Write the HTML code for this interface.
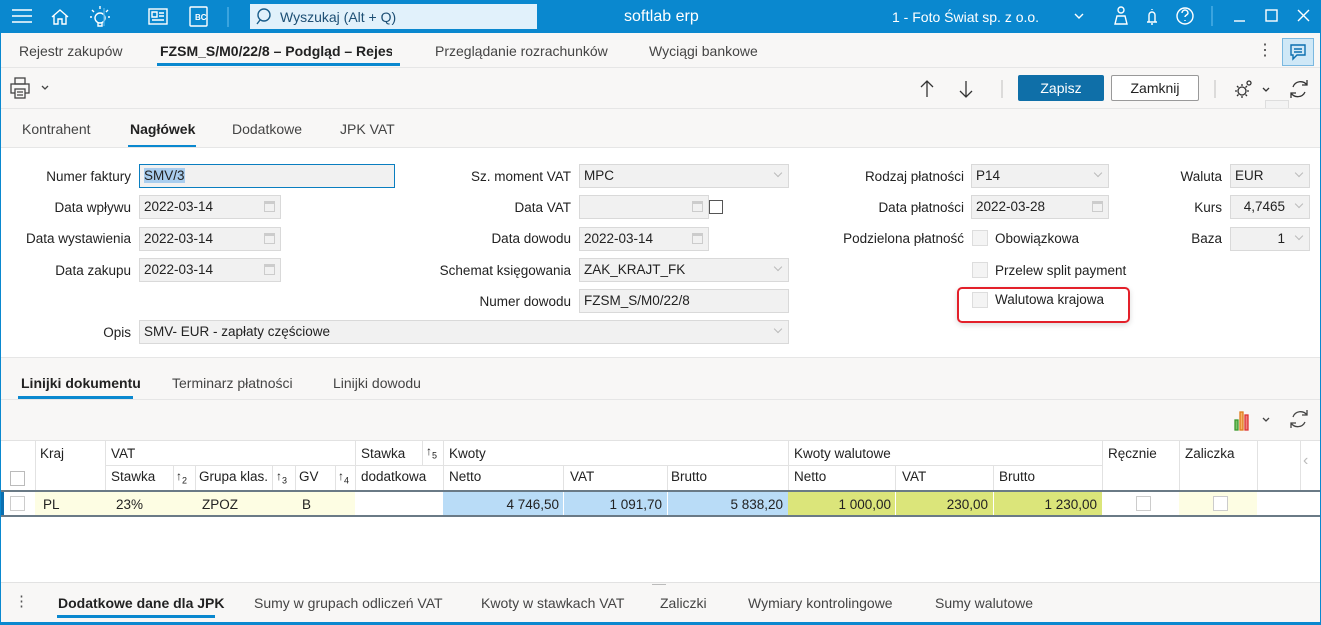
<!DOCTYPE html><html><head><meta charset="utf-8"><style>
*{box-sizing:border-box;margin:0;padding:0}
body{width:1321px;height:625px;overflow:hidden;position:relative;font-family:"Liberation Sans",sans-serif;font-size:13.5px;color:#222;background:#fff}
.a{position:absolute}
.t{position:absolute;white-space:nowrap}
.lbl{position:absolute;text-align:right;white-space:nowrap;font-size:13.5px;color:#222}
.in{position:absolute;height:24px;background:#f1f1f1;border:1px solid #d9d9d9;padding:3px 4px;font-size:13.5px;white-space:nowrap;color:#222}
.cal{position:absolute;right:5px;top:5px;width:11px;height:11px;border:1px solid #ccc;border-top-width:3px}
.dd{position:absolute;right:7px;top:5px;width:6px;height:6px;border-right:1px solid #bbb;border-bottom:1px solid #bbb;transform:rotate(45deg)}
.cb{position:absolute;width:16px;height:16px;border:1px solid #ddd;background:#f4f4f4}
.tab{position:absolute;font-size:14px;color:#444;white-space:nowrap}
.gh{position:absolute;font-size:13.5px;color:#222;white-space:nowrap}
.vl{position:absolute;width:1px;background:#e2e2e2}
.num{position:absolute;text-align:right;font-size:13.5px;top:497px}
</style></head><body>
<!-- title bar -->
<div class="a" style="left:0;top:0;width:1321px;height:33px;background:#0a88cf"></div>
<svg class="a" style="left:0;top:0" width="1321" height="33" fill="none" stroke="#fff" stroke-width="1.4">
<path d="M12 10h20M12 16h20M12 22h20"/>
<path d="M52 17l8-7 8 7M54 15v9h4v-5h4v5h4v-9"/>
<circle cx="100" cy="18" r="5"/><path d="M98 23v3h4v-3M100 6v3M92 10l2 2M108 10l-2 2M90 17h2M108 17h2"/>
<path d="M104 6v21" stroke="none"/><path d="M104 8v18" stroke="#4fb0e6" transform="translate(0,0)" />
<rect x="149" y="9" width="18" height="15"/><path d="M152 12h5v5h-5zM159 13h5M159 16h5M152 20h12"/>
<rect x="190" y="7" width="17" height="19" rx="1"/>
<path d="M228 7v20" stroke="#4fb0e6"/>
<path d="M1075 14l4 4 4-4"/>
<circle cx="1121" cy="10" r="3"/><path d="M1115 24h12l-2-8h-8z"/>
<path d="M1147 22h10M1149 22v-7a3 3 0 016 0v7M1152 9v1M1151 24h2"/>
<circle cx="1185" cy="16" r="8"/><path d="M1182 13a3 3 0 116 0c0 2-3 2-3 4M1185 20v1"/>
<path d="M1212 6v20" stroke="#4fb0e6"/>
<path d="M1234 21h11"/><rect x="1266" y="10" width="11" height="11"/><path d="M1298 10l11 11M1309 10l-11 11"/>
</svg>
<div class="t" style="left:195px;top:13px;color:#fff;font-size:8px;font-weight:bold">BC</div>
<div class="a" style="left:250px;top:4px;width:287px;height:25px;background:#e1f1fb"></div>
<svg class="a" style="left:255px;top:7px" width="20" height="20" fill="none" stroke="#1a5d8a" stroke-width="1.4"><circle cx="9" cy="8" r="6"/><path d="M5 13l-3 4"/></svg>
<div class="t" style="left:280px;top:9px;font-size:14px;color:#1d4f74">Wyszukaj (Alt + Q)</div>
<div class="t" style="left:624px;top:8px;font-size:16px;color:#fff">softlab erp</div>
<div class="t" style="left:892px;top:9px;font-size:14px;color:#fff">1 - Foto Świat sp. z o.o.</div>
<!-- window frame -->
<div class="a" style="left:0;top:33px;width:1px;height:592px;background:#0a88cf"></div>
<div class="a" style="left:1320px;top:33px;width:1px;height:592px;background:#0a88cf"></div>
<div class="a" style="left:0;top:622px;width:1321px;height:3px;background:#0a88cf"></div>
<!-- tab row -->
<div class="a" style="left:1px;top:33px;width:1319px;height:115px;background:#f8f7f6"></div>
<div class="tab" style="left:19px;top:43px">Rejestr zakupów</div>
<div class="tab" style="left:160px;top:43px;font-weight:bold;color:#222;width:232px;overflow:hidden">FZSM_S/M0/22/8 – Podgląd – Rejestr</div>
<div class="a" style="left:157px;top:63px;width:243px;height:3px;background:#0a88cf"></div>
<div class="tab" style="left:435px;top:43px">Przeglądanie rozrachunków</div>
<div class="tab" style="left:649px;top:43px">Wyciągi bankowe</div>
<div class="t" style="left:1257px;top:40px;font-size:16px;color:#444">⋮</div>
<div class="a" style="left:1282px;top:38px;width:32px;height:28px;background:#cfe8f7;border:1px solid #7ab8e0"></div>
<svg class="a" style="left:1288px;top:42px" width="20" height="20" fill="none" stroke="#0a6fb0" stroke-width="1.4"><path d="M3 3h14v10H9l-4 4v-4H3z M6 7h8M6 10h8"/></svg>
<div class="a" style="left:1px;top:67px;width:1319px;height:1px;background:#e6e6e6"></div>
<!-- toolbar -->
<svg class="a" style="left:8px;top:76px" width="46" height="24" fill="none" stroke="#444" stroke-width="1.3"><rect x="7" y="2" width="10" height="6"/><rect x="3" y="8" width="18" height="9"/><rect x="7" y="13" width="10" height="9" fill="#f8f7f6"/><path d="M9 16h6M9 19h6M34 10l3 3 3-3"/></svg>
<svg class="a" style="left:910px;top:76px" width="400" height="26" fill="none" stroke="#333" stroke-width="1.3"><path d="M17 5v16M11 11l6-6 6 6M56 5v16M50 15l6 6 6-6"/><path d="M92 4v18" stroke="#ccc"/><path d="M305 4v18" stroke="#ccc"/>
<circle cx="332" cy="15" r="4"/><path d="M332 8v2M332 20v2M325 15h2M337 15h2M327 10l1.5 1.5M337 20l-1.5-1.5M327 20l1.5-1.5M337 10l-1.5 1.5"/><circle cx="339" cy="7" r="2"/>
<path d="M353 12l3 3 3-3"/>
<path d="M397 9a8 8 0 00-14 2M381 17a8 8 0 0014-1M397 4v5h-5M381 22v-5h5"/></svg>
<div class="a" style="left:1018px;top:75px;width:86px;height:26px;background:#0f6fa8;border-radius:2px;color:#fff;text-align:center;line-height:26px;font-size:14px">Zapisz</div>
<div class="a" style="left:1111px;top:75px;width:88px;height:26px;background:#fff;border:1px solid #999;border-radius:2px;text-align:center;line-height:24px;font-size:14px">Zamknij</div>
<div class="a" style="left:1265px;top:100px;width:24px;height:9px;border:1px solid #ddd;border-bottom:none;background:#f3f3f3"></div>
<div class="a" style="left:1px;top:108px;width:1319px;height:1px;background:#e6e6e6"></div>
<!-- subtabs -->
<div class="tab" style="left:22px;top:121px">Kontrahent</div>
<div class="tab" style="left:130px;top:121px;font-weight:bold;color:#222">Nagłówek</div>
<div class="a" style="left:128px;top:145px;width:68px;height:3px;background:#0a88cf"></div>
<div class="tab" style="left:232px;top:121px">Dodatkowe</div>
<div class="tab" style="left:340px;top:121px">JPK VAT</div>
<div class="a" style="left:1px;top:147px;width:1319px;height:1px;background:#e6e6e6"></div>
<!-- form left -->
<div class="lbl" style="right:1190px;top:169px">Numer faktury</div>
<div class="in" style="left:139px;top:164px;width:256px;border-color:#0a7ec0;background:#f1f1f1"><span style="background:#a9cdee">SMV/3</span></div>
<div class="lbl" style="right:1190px;top:200px">Data wpływu</div>
<div class="in" style="left:139px;top:195px;width:142px">2022-03-14<div class="cal"></div></div>
<div class="lbl" style="right:1190px;top:231px">Data wystawienia</div>
<div class="in" style="left:139px;top:227px;width:142px">2022-03-14<div class="cal"></div></div>
<div class="lbl" style="right:1190px;top:263px">Data zakupu</div>
<div class="in" style="left:139px;top:258px;width:142px">2022-03-14<div class="cal"></div></div>
<div class="lbl" style="right:1190px;top:325px">Opis</div>
<div class="in" style="left:139px;top:320px;width:650px">SMV- EUR - zapłaty częściowe<div class="dd"></div></div>
<!-- form middle -->
<div class="lbl" style="right:750px;top:169px">Sz. moment VAT</div>
<div class="in" style="left:579px;top:164px;width:210px">MPC<div class="dd"></div></div>
<div class="lbl" style="right:750px;top:200px">Data VAT</div>
<div class="in" style="left:579px;top:195px;width:130px"><div class="cal"></div></div>
<div class="a" style="left:709px;top:200px;width:14px;height:14px;border:1px solid #555;background:#fff"></div>
<div class="lbl" style="right:750px;top:231px">Data dowodu</div>
<div class="in" style="left:579px;top:227px;width:130px">2022-03-14<div class="cal"></div></div>
<div class="lbl" style="right:750px;top:263px">Schemat księgowania</div>
<div class="in" style="left:579px;top:258px;width:210px">ZAK_KRAJT_FK<div class="dd"></div></div>
<div class="lbl" style="right:750px;top:294px">Numer dowodu</div>
<div class="in" style="left:579px;top:289px;width:210px">FZSM_S/M0/22/8</div>
<!-- form right -->
<div class="lbl" style="right:357px;top:169px">Rodzaj płatności</div>
<div class="in" style="left:971px;top:164px;width:138px">P14<div class="dd"></div></div>
<div class="lbl" style="right:357px;top:200px">Data płatności</div>
<div class="in" style="left:971px;top:195px;width:138px">2022-03-28<div class="cal"></div></div>
<div class="lbl" style="right:357px;top:231px">Podzielona płatność</div>
<div class="cb" style="left:972px;top:230px"></div><div class="t" style="left:995px;top:231px">Obowiązkowa</div>
<div class="cb" style="left:972px;top:262px"></div><div class="t" style="left:995px;top:263px">Przelew split payment</div>
<div class="a" style="left:957px;top:287px;width:173px;height:36px;border:2px solid #e3202a;border-radius:5px;box-shadow:0 2px 6px rgba(0,0,0,.15)"></div>
<div class="cb" style="left:972px;top:292px"></div><div class="t" style="left:995px;top:292px">Walutowa krajowa</div>
<div class="lbl" style="right:99px;top:169px">Waluta</div>
<div class="in" style="left:1230px;top:164px;width:80px">EUR<div class="dd"></div></div>
<div class="lbl" style="right:99px;top:200px">Kurs</div>
<div class="in" style="left:1230px;top:195px;width:80px;text-align:right;padding-right:24px">4,7465<div class="dd"></div></div>
<div class="lbl" style="right:99px;top:231px">Baza</div>
<div class="in" style="left:1230px;top:227px;width:80px;text-align:right;padding-right:24px">1<div class="dd"></div></div>
<!-- lower tabs -->
<div class="a" style="left:1px;top:357px;width:1319px;height:83px;background:#f8f7f6;border-top:1px solid #e6e6e6"></div>
<div class="tab" style="left:21px;top:375px;font-weight:bold;color:#222">Linijki dokumentu</div>
<div class="a" style="left:18px;top:396px;width:89px;height:3px;background:#0a88cf;width:115px"></div>
<div class="tab" style="left:172px;top:375px">Terminarz płatności</div>
<div class="tab" style="left:333px;top:375px">Linijki dowodu</div>
<div class="a" style="left:1px;top:399px;width:1319px;height:1px;background:#e6e6e6"></div>
<svg class="a" style="left:1230px;top:406px" width="85" height="28" fill="none" stroke-width="1.3"><rect x="5" y="14" width="3" height="10" fill="#7cc36b" stroke="#3c9a2d"/><rect x="10" y="6" width="3" height="18" fill="#f6b26b" stroke="#e07b1a"/><rect x="15" y="9" width="3" height="15" fill="#f08080" stroke="#d33"/><path d="M33 12l3 3 3-3" stroke="#444"/><path d="M77 9a8 8 0 00-14 2M61 17a8 8 0 0014-1M77 4v5h-5M61 22v-5h5" stroke="#444"/></svg>
<div class="a" style="left:1px;top:440px;width:1319px;height:1px;background:#e2e2e2"></div>
<!-- grid header -->
<div class="a" style="left:105px;top:465px;width:338px;height:1px;background:#e2e2e2"></div>
<div class="a" style="left:443px;top:465px;width:659px;height:1px;background:#e2e2e2"></div>
<div class="vl" style="left:35px;top:440px;height:50px"></div>
<div class="vl" style="left:105px;top:440px;height:50px"></div>
<div class="vl" style="left:195px;top:465px;height:25px"></div>
<div class="vl" style="left:272px;top:465px;height:25px"></div>
<div class="vl" style="left:295px;top:465px;height:25px"></div>
<div class="vl" style="left:335px;top:465px;height:25px"></div>
<div class="vl" style="left:173px;top:465px;height:25px"></div>
<div class="vl" style="left:355px;top:440px;height:50px"></div>
<div class="vl" style="left:422px;top:440px;height:25px"></div>
<div class="vl" style="left:443px;top:440px;height:50px"></div>
<div class="vl" style="left:563px;top:465px;height:25px"></div>
<div class="vl" style="left:667px;top:465px;height:25px"></div>
<div class="vl" style="left:788px;top:440px;height:50px"></div>
<div class="vl" style="left:895px;top:465px;height:25px"></div>
<div class="vl" style="left:993px;top:465px;height:25px"></div>
<div class="vl" style="left:1102px;top:440px;height:50px"></div>
<div class="vl" style="left:1179px;top:440px;height:50px"></div>
<div class="vl" style="left:1257px;top:440px;height:50px"></div>
<div class="vl" style="left:1300px;top:440px;height:50px"></div>
<div class="a" style="left:10px;top:471px;width:15px;height:15px;border:1px solid #bbb;background:#fff"></div>
<div class="gh" style="left:40px;top:446px">Kraj</div>
<div class="gh" style="left:111px;top:446px">VAT</div>
<div class="gh" style="left:111px;top:469px">Stawka</div>
<div class="gh" style="left:176px;top:469px;font-size:12px">↑<sub style="font-size:9px">2</sub></div>
<div class="gh" style="left:199px;top:469px">Grupa klas.</div>
<div class="gh" style="left:276px;top:469px;font-size:12px">↑<sub style="font-size:9px">3</sub></div>
<div class="gh" style="left:299px;top:469px">GV</div>
<div class="gh" style="left:338px;top:469px;font-size:12px">↑<sub style="font-size:9px">4</sub></div>
<div class="gh" style="left:361px;top:446px">Stawka</div>
<div class="gh" style="left:426px;top:444px;font-size:12px">↑<sub style="font-size:9px">5</sub></div>
<div class="gh" style="left:361px;top:469px">dodatkowa</div>
<div class="gh" style="left:449px;top:446px">Kwoty</div>
<div class="gh" style="left:449px;top:469px">Netto</div>
<div class="gh" style="left:570px;top:469px">VAT</div>
<div class="gh" style="left:671px;top:469px">Brutto</div>
<div class="gh" style="left:794px;top:446px">Kwoty walutowe</div>
<div class="gh" style="left:794px;top:469px">Netto</div>
<div class="gh" style="left:902px;top:469px">VAT</div>
<div class="gh" style="left:999px;top:469px">Brutto</div>
<div class="gh" style="left:1108px;top:446px">Ręcznie</div>
<div class="gh" style="left:1185px;top:446px">Zaliczka</div>
<div class="t" style="left:1303px;top:452px;color:#bbb;font-size:16px">‹</div>
<!-- row -->
<div class="a" style="left:1px;top:490px;width:1319px;height:2px;background:#6a7a86"></div>
<div class="a" style="left:1px;top:515px;width:1319px;height:2px;background:#6a7a86"></div>
<div class="a" style="left:1px;top:492px;width:3px;height:23px;background:#0a6fb0"></div>
<div class="a" style="left:35px;top:492px;width:320px;height:23px;background:#fdfde3"></div>
<div class="a" style="left:443px;top:492px;width:345px;height:23px;background:#b9dcf7"></div>
<div class="a" style="left:788px;top:492px;width:314px;height:23px;background:#dbe57a"></div>
<div class="a" style="left:1179px;top:492px;width:78px;height:23px;background:#fdfde3"></div>
<div class="vl" style="left:563px;top:492px;height:23px;background:#fff"></div>
<div class="vl" style="left:667px;top:492px;height:23px;background:#fff"></div>
<div class="vl" style="left:895px;top:492px;height:23px;background:#fff"></div>
<div class="vl" style="left:993px;top:492px;height:23px;background:#fff"></div>
<div class="a" style="left:10px;top:496px;width:15px;height:15px;border:1px solid #ccc;background:#fff"></div>
<div class="t" style="left:43px;top:497px">PL</div>
<div class="t" style="left:116px;top:497px">23%</div>
<div class="t" style="left:202px;top:497px">ZPOZ</div>
<div class="t" style="left:302px;top:497px">B</div>
<div class="num" style="left:443px;width:116px">4 746,50</div>
<div class="num" style="left:563px;width:99px">1 091,70</div>
<div class="num" style="left:667px;width:116px">5 838,20</div>
<div class="num" style="left:788px;width:103px">1 000,00</div>
<div class="num" style="left:895px;width:93px">230,00</div>
<div class="num" style="left:993px;width:104px">1 230,00</div>
<div class="a" style="left:1136px;top:496px;width:15px;height:15px;border:1px solid #ccc;background:#fff"></div>
<div class="a" style="left:1213px;top:496px;width:15px;height:15px;border:1px solid #ccc;background:#fff"></div>
<!-- bottom tabs -->
<div class="a" style="left:1px;top:582px;width:1319px;height:40px;background:#f8f7f6;border-top:1px solid #e2e2e2"></div>
<div class="a" style="left:652px;top:584px;width:14px;height:1px;background:#bbb"></div>
<div class="t" style="left:14px;top:592px;font-size:15px;color:#555">⋮</div>
<div class="tab" style="left:58px;top:595px;font-weight:bold;color:#222">Dodatkowe dane dla JPK</div>
<div class="a" style="left:57px;top:615px;width:158px;height:3px;background:#0a88cf"></div>
<div class="tab" style="left:254px;top:595px">Sumy w grupach odliczeń VAT</div>
<div class="tab" style="left:481px;top:595px">Kwoty w stawkach VAT</div>
<div class="tab" style="left:660px;top:595px">Zaliczki</div>
<div class="tab" style="left:748px;top:595px">Wymiary kontrolingowe</div>
<div class="tab" style="left:935px;top:595px">Sumy walutowe</div>
</body></html>
